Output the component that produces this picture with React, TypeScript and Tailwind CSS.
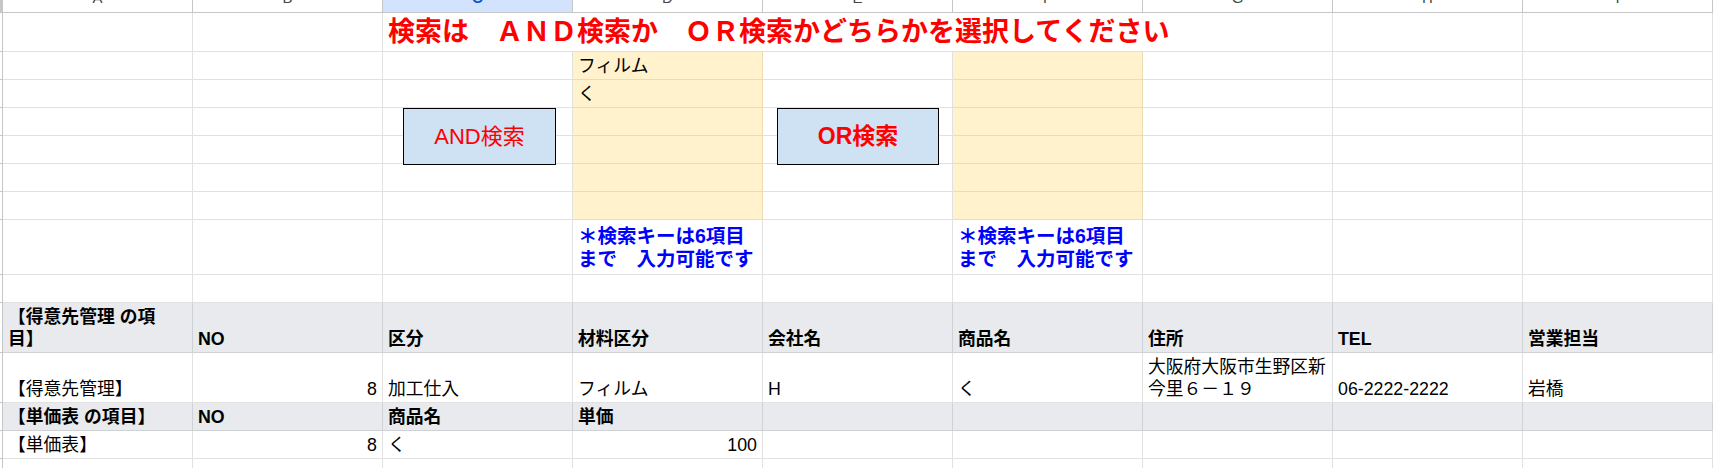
import React from "react";

type Variant = "n" | "y" | "g";
type CellSpec = {
  t?: React.ReactNode;
  v?: Variant;
  right?: boolean;
  bold?: boolean;
  blue?: boolean;
};

const variantClass: Record<Variant, string> = {
  n: "bg-white border-[#e1e1e1]",
  y: "bg-[#fff2cc] border-[#ecdcae]",
  g: "bg-[#e8eaed] border-[#cfd2d5]",
};

const COLS = ["A", "B", "C", "D", "E", "F", "G", "H", "I"];

function Cell({ spec }: { spec?: CellSpec }) {
  const s = spec ?? {};
  const v = variantClass[s.v ?? "n"];
  return (
    <div
      className={`flex w-[190px] shrink-0 items-end border-r border-b px-[5px] whitespace-nowrap ${v} ${
        s.right ? "justify-end" : "justify-start"
      } ${
        s.blue
          ? "pb-[3px] text-[19.5px] leading-[23px] font-bold text-[#0000ff]"
          : "pb-[2px] text-[17.8px] leading-[22px] text-black"
      } ${s.bold ? "font-bold" : ""}`}
    >
      <div>{s.t}</div>
    </div>
  );
}

function RowHead({ height }: { height: string }) {
  return <div className={`w-[3px] shrink-0 border-r border-b border-[#c4c7c5] bg-white ${height}`} />;
}

function Row({ height, cells }: { height: string; cells: (CellSpec | undefined)[] }) {
  return (
    <div className={`flex ${height}`}>
      <RowHead height={height} />
      {COLS.map((c, i) => (
        <Cell key={c} spec={cells[i]} />
      ))}
    </div>
  );
}

const note = (
  <>
    ＊検索キーは6項目
    <br />
    まで　入力可能です
  </>
);

const yellow: CellSpec = { v: "y" };
const gray: CellSpec = { v: "g" };

export default function App() {
  return (
    <div className="relative h-[468px] w-[1714px] overflow-hidden bg-white font-['Liberation_Sans','Noto_Sans_CJK_JP',sans-serif]">
      {/* column header, mostly scrolled off */}
      <div className="flex h-[13px]">
        <div className="w-[3px] shrink-0 border-b border-[#c4c7c5] bg-[#c4c7c5]" />
        {COLS.map((c) => (
          <div
            key={c}
            className={`h-[13px] w-[190px] shrink-0 overflow-hidden border-r border-b border-[#c4c7c5] text-center ${
              c === "C" ? "bg-[#d3e3fd] font-bold text-[#0b57d0]" : "bg-white text-[#444746]"
            }`}
          >
            <div className="-mt-[12px] text-[15px] leading-[20px]">{c}</div>
          </div>
        ))}
      </div>

      {/* title row */}
      <div className="flex h-[39px]">
        <RowHead height="h-[39px]" />
        <div className="w-[190px] shrink-0 border-r border-b border-[#e1e1e1]" />
        <div className="w-[190px] shrink-0 border-r border-b border-[#e1e1e1]" />
        <div className="flex w-[950px] shrink-0 items-center border-r border-b border-[#e1e1e1] pl-[5px] whitespace-nowrap text-[27px] leading-[30px] font-bold text-[#ff0000]">
          検索は　ＡＮＤ検索か　ＯＲ検索かどちらかを選択してください
        </div>
        <div className="w-[190px] shrink-0 border-r border-b border-[#e1e1e1]" />
        <div className="w-[190px] shrink-0 border-r border-b border-[#e1e1e1]" />
      </div>

      <Row height="h-[28px]" cells={[, , , { t: "フィルム", v: "y" }, , yellow]} />
      <Row height="h-[28px]" cells={[, , , { t: "く", v: "y" }, , yellow]} />
      <Row height="h-[28px]" cells={[, , , yellow, , yellow]} />
      <Row height="h-[28px]" cells={[, , , yellow, , yellow]} />
      <Row height="h-[28px]" cells={[, , , yellow, , yellow]} />
      <Row height="h-[28px]" cells={[, , , yellow, , yellow]} />
      <Row height="h-[55px]" cells={[, , , { t: note, blue: true }, , { t: note, blue: true }]} />
      <Row height="h-[28px]" cells={[]} />
      <Row
        height="h-[50px]"
        cells={[
          {
            t: (
              <>
                【得意先管理 の項
                <br />
                目】
              </>
            ),
            v: "g",
            bold: true,
          },
          { t: "NO", v: "g", bold: true },
          { t: "区分", v: "g", bold: true },
          { t: "材料区分", v: "g", bold: true },
          { t: "会社名", v: "g", bold: true },
          { t: "商品名", v: "g", bold: true },
          { t: "住所", v: "g", bold: true },
          { t: "TEL", v: "g", bold: true },
          { t: "営業担当", v: "g", bold: true },
        ]}
      />
      <Row
        height="h-[50px]"
        cells={[
          { t: "【得意先管理】" },
          { t: "8", right: true },
          { t: "加工仕入" },
          { t: "フィルム" },
          { t: "H" },
          { t: "く" },
          {
            t: (
              <>
                大阪府大阪市生野区新
                <br />
                今里６－１９
              </>
            ),
          },
          { t: "06-2222-2222" },
          { t: "岩橋" },
        ]}
      />
      <Row
        height="h-[28px]"
        cells={[
          { t: "【単価表 の項目】", v: "g", bold: true },
          { t: "NO", v: "g", bold: true },
          { t: "商品名", v: "g", bold: true },
          { t: "単価", v: "g", bold: true },
          gray,
          gray,
          gray,
          gray,
          gray,
        ]}
      />
      <Row
        height="h-[28px]"
        cells={[{ t: "【単価表】" }, { t: "8", right: true }, { t: "く" }, { t: "100", right: true }]}
      />
      <Row height="h-[28px]" cells={[]} />

      {/* floating buttons drawn over the sheet */}
      <button
        type="button"
        className="absolute left-[403px] top-[108px] flex h-[57px] w-[153px] items-center justify-center border-[1.5px] border-black bg-[#cfe2f3] text-[22px] text-[#ff0000]"
      >
        AND検索
      </button>
      <button
        type="button"
        className="absolute left-[777px] top-[108px] flex h-[57px] w-[162px] items-center justify-center border-[1.5px] border-black bg-[#cfe2f3] text-[23px] font-bold text-[#ff0000]"
      >
        OR検索
      </button>
    </div>
  );
}
